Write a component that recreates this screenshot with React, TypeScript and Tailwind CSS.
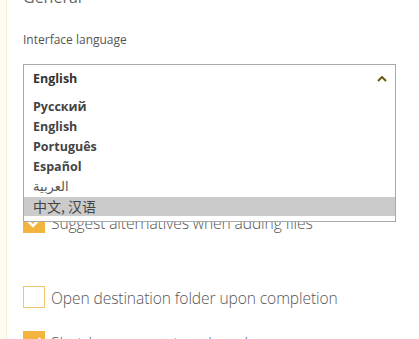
import React from 'react';

const languages = ['Русский', 'English', 'Português', 'Español'];

const Check = () => (
  <svg viewBox="0 0 22 22" className="w-[22px] h-[22px]">
    <path d="M5.5 10.5 L10 15 L16.5 8" fill="none" stroke="#ffffff" strokeWidth="2.6" strokeLinecap="square" />
  </svg>
);

const CheckRow: React.FC<{ checked: boolean; label: string }> = ({ checked, label }) => (
  <div className="flex items-center gap-[6px]">
    <div
      className={`w-[22px] h-[22px] shrink-0 ${checked ? 'bg-[#f2b43e]' : 'border border-[#f0c66e] bg-white'}`}
    >
      {checked && <Check />}
    </div>
    <span className="mt-[4px] text-[15.6px] font-light text-[#555] leading-none tracking-[-0.1px]">{label}</span>
  </div>
);

export default function App() {
  return (
    <div className="w-[419px] h-[339px] overflow-hidden bg-white flex font-['Open_Sans','Noto_Sans','Noto_Sans_CJK_SC',sans-serif]">
      <div className="w-[7px] shrink-0 bg-[#fffdf1] border-r border-[#f7f1d8]" />
      <div className="flex-1 relative pl-[16px] pr-[23px]">
        <div className="text-[16px] text-[#666] -mt-[11px] leading-[16px]">General</div>

        <div className="mt-[28px] text-[12px] text-[#555] leading-[14px]">Interface language</div>

        <div className="relative mt-[17px]">
          <div className="h-[30px] border border-[#a9a9a9] flex items-center justify-between pl-[9px] pr-[8px]">
            <span className="text-[12.5px] font-bold text-[#333]">English</span>
            <svg viewBox="0 0 10 6" className="w-[10px] h-[6px]">
              <path d="M1 5 L5 1 L9 5" fill="none" stroke="#6e5512" strokeWidth="2" />
            </svg>
          </div>

          <div className="absolute left-0 right-0 top-[29px] z-10 bg-white border border-t-0 border-[#a9a9a9] pt-[4px] pb-[5px]">
            {languages.map((l) => (
              <div key={l} className="h-[20px] flex items-center pl-[9px] text-[12.5px] font-bold text-[#444]">
                {l}
              </div>
            ))}
            <div className="h-[20px] flex items-center pl-[9px] text-[13px] text-[#555] font-['Noto_Sans','DejaVu_Sans',sans-serif]">
              العربية
            </div>
            <div className="h-[19px] flex items-center pl-[9px] text-[14px] text-[#444] bg-[#cbcbcb] font-['Noto_Sans_CJK_SC',sans-serif]">
              中文, 汉语
            </div>
          </div>

          <div className="mt-[117px] flex flex-col gap-[53px]">
            <CheckRow checked label="Suggest alternatives when adding files" />
            <CheckRow checked={false} label="Open destination folder upon completion" />
          </div>
          <div className="mt-[23px]">
            <CheckRow checked label="Shutdown computer when done" />
          </div>
        </div>
      </div>
    </div>
  );
}
